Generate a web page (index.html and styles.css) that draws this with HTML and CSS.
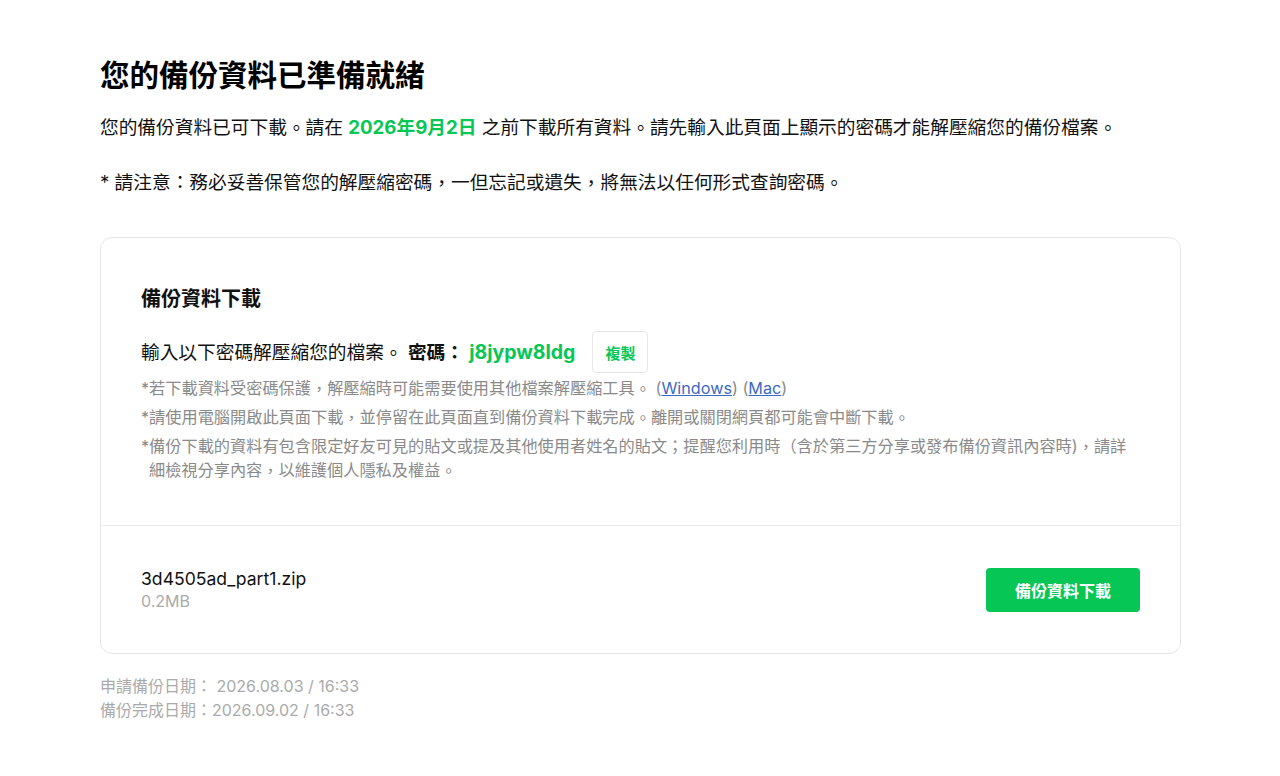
FILE: index.html
```html
<!DOCTYPE html>
<html lang="zh-Hant">
<head>
<meta charset="utf-8">
<link rel="stylesheet" href="styles.css">
</head>
<body>
<main class="page">
  <h1 class="title">您的備份資料已準備就緒</h1>
  <p class="lead">您的備份資料已可下載<span class="pn">。</span>請在 <strong class="green">2026年9月2日</strong> 之前下載所有資料<span class="pn">。</span>請先輸入此頁面上顯示的密碼才能解壓縮您的備份檔案<span class="pn">。</span></p>
  <p class="notice">* 請注意：務必妥善保管您的解壓縮密碼<span class="pn">，</span>一但忘記或遺失<span class="pn">，</span>將無法以任何形式查詢密碼<span class="pn">。</span></p>

  <section class="card">
    <div class="card-top">
      <h2 class="card-title">備份資料下載</h2>
      <div class="pw-row">
        <span class="pw-text">輸入以下密碼解壓縮您的檔案<span class="pn">。</span> <b class="pw-label">密碼：</b> <b class="pw green">j8jypw8ldg</b></span>
        <button class="copy">複製</button>
      </div>
      <ul class="notes">
        <li>*若下載資料受密碼保護<span class="pn">，</span>解壓縮時可能需要使用其他檔案解壓縮工具<span class="pn">。</span> (<a href="#">Windows</a>) (<a href="#">Mac</a>)</li>
        <li>*請使用電腦開啟此頁面下載<span class="pn">，</span>並停留在此頁面直到備份資料下載完成<span class="pn">。</span>離開或關閉網頁都可能會中斷下載<span class="pn">。</span></li>
        <li>*備份下載的資料有包含限定好友可見的貼文或提及其他使用者姓名的貼文；提醒您利用時（含於第三方分享或發布備份資訊內容時)<span class="pn">，</span><span>請詳</span><span>細檢視分享內容</span><span class="pn">，</span>以維護個人隱私及權益<span class="pn">。</span></li>
      </ul>
    </div>
    <div class="card-bottom">
      <div class="file">
        <div class="file-name">3d4505ad_part1.zip</div>
        <div class="file-size">0.2MB</div>
      </div>
      <button class="download">備份資料下載</button>
    </div>
  </section>

  <div class="dates">
    <div>申請備份日期： 2026.08.03 / 16:33</div>
    <div>備份完成日期：2026.09.02 / 16:33</div>
  </div>
</main>
</body>
</html>
```

FILE: styles.css
```css
* { box-sizing: border-box; }
html, body { margin: 0; padding: 0; background: #fff; }
body {
  font-family: "Inter", "Liberation Sans", "Noto Sans CJK TC", sans-serif;
  color: #111;
}
.pn {
  font-family: "Noto Sans CJK SC", "Noto Sans CJK TC", sans-serif;
  line-height: 0;
  vertical-align: -1px;
}
.page {
  width: 1081px;
  margin-left: 100px;
  padding-top: 55px;
}
.title {
  margin: 0;
  font-size: 29.5px;
  line-height: 40px;
  font-weight: 700;
  color: #000;
}
.lead {
  margin: 19px 0 0;
  font-size: 18.7px;
  line-height: 28px;
}
.green { color: #06c755; font-weight: 700; }
.notice {
  margin: 27px 0 0;
  font-size: 18.7px;
  line-height: 28px;
}
.card {
  margin-top: 40px;
  border: 1px solid #e6e6e6;
  border-radius: 12px;
  background: #fff;
}
.card-top {
  padding: 47px 40px 43px;
  border-bottom: 1px solid #ececec;
}
.card-title {
  margin: 0;
  font-size: 20px;
  line-height: 28px;
  font-weight: 700;
}
.pw-row {
  margin-top: 18px;
  display: flex;
  align-items: center;
  gap: 17px;
  font-size: 18.7px;
}
.pw-text { line-height: 28px; }
.pw-label { font-weight: 700; color: #111; }
.pw { font-size: 19.5px; }
.copy {
  height: 42px;
  padding: 0 12px;
  border: 1px solid #e8e8e8;
  border-radius: 4px;
  background: #fff;
  color: #06c755;
  font-family: inherit;
  font-weight: 700;
  font-size: 15px;
}
.notes {
  list-style: none;
  margin: 3px 0 0;
  padding: 0;
  font-size: 16.2px;
  line-height: 24px;
  color: #8a8a8a;
}
.notes li {
  padding-left: 8px;
  text-indent: -8px;
}
.notes li + li { margin-top: 5px; }
.notes a { color: #3e69c2; text-decoration: underline; }
.card-bottom {
  display: flex;
  align-items: center;
  justify-content: space-between;
  padding: 41px 40px 41px;
}
.file-name {
  font-size: 17.6px;
  line-height: 23px;
  color: #111;
}
.file-size {
  font-size: 16px;
  line-height: 22px;
  color: #aaa;
}
.download {
  height: 44px;
  padding: 0 29px;
  border: none;
  border-radius: 4px;
  background: #06c755;
  color: #fff;
  font-family: inherit;
  font-weight: 700;
  font-size: 16px;
}
.dates {
  margin-top: 20px;
  font-size: 16px;
  line-height: 24px;
  color: #aaa;
}
```
